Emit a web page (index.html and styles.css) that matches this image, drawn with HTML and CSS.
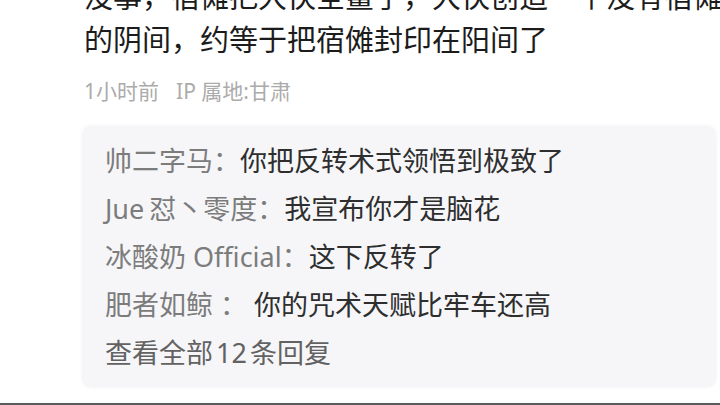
FILE: index.html
```html
<!DOCTYPE html>
<html lang="zh-CN">
<head>
<meta charset="utf-8">
<title>评论</title>
<link rel="stylesheet" href="styles.css">
</head>
<body>
<div class="page">
  <div class="comment">
    <p class="content">没事，宿傩把大伙全鲨了，大伙创造一个没有宿傩<br>的阴间，约等于把宿傩封印在阳间了</p>
    <div class="meta"><span class="time">1小时前</span><span class="ip">IP 属地:甘肃</span></div>
    <div class="replies">
      <div class="reply"><span class="name">帅二字马：</span><span class="text">你把反转术式领悟到极致了</span></div>
      <div class="reply"><span class="name"><span class="latin">Jue</span>怼丶零度：</span><span class="text">我宣布你才是脑花</span></div>
      <div class="reply"><span class="name">冰酸奶 Official：</span><span class="text">这下反转了</span></div>
      <div class="reply"><span class="name">肥者如鲸 ： </span><span class="text">你的咒术天赋比牢车还高</span></div>
      <div class="more">查看全部<span class="num">12</span>条回复</div>
    </div>
  </div>
  <div class="bottom-line"></div>
</div>
</body>
</html>
```

FILE: styles.css
```css
html, body {
  margin: 0;
  padding: 0;
  background: #ffffff;
}
body {
  width: 720px;
  height: 405px;
  overflow: hidden;
  font-family: "Noto Sans", "Noto Sans CJK SC", sans-serif;
}
.page {
  display: flex;
  flex-direction: column;
  height: 405px;
}
.comment {
  padding-left: 84px;
  display: flex;
  flex-direction: column;
}
.content {
  margin: -25px 0 0 0;
  font-size: 29px;
  line-height: 43px;
  color: #1c1c1c;
  white-space: nowrap;
}
.meta {
  margin-top: 15px;
  font-size: 21px;
  line-height: 30px;
  color: #ababab;
  display: flex;
  gap: 17px;
}
.replies {
  margin-top: 21px;
  margin-left: -1px;
  width: 610px;
  padding: 10px 0 9px 22px;
  background: #f6f6f9;
  border-radius: 8px;
  box-shadow: 0 0 4px rgba(230, 230, 236, 0.9);
  font-size: 27px;
  line-height: 48px;
}
.reply {
  white-space: nowrap;
}
.name {
  color: #7c7c7c;
}
.latin {
  margin-right: 5px;
}
.text {
  color: #2e2e2e;
}
.more {
  color: #626262;
}
.num {
  margin: 0 3px;
}
.bottom-line {
  margin-top: auto;
  height: 2px;
  background: #5a5a5a;
}
```
